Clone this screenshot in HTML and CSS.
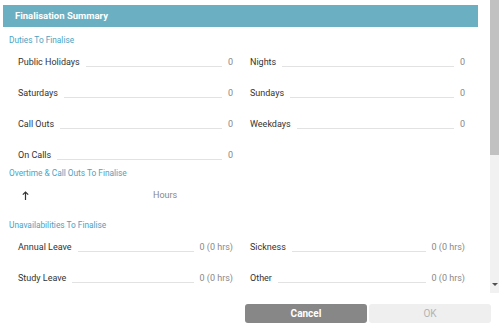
FILE: index.html
```
<!doctype html>
<html lang="en">
<head>
    <meta charset="utf-8">
    <title>Finalisation Summary</title>
    <link rel="stylesheet" href="styles.css">
</head>
<body>
<div class="dialog">
    <div class="main">
        <div class="content">
            <div class="header">Finalisation Summary</div>

            <div class="section-title first">Duties To Finalise</div>
            <div class="grid">
                <div class="row"><span class="label">Public Holidays</span><span class="line"></span><span class="value">0</span></div>
                <div class="row"><span class="label">Nights</span><span class="line"></span><span class="value">0</span></div>
                <div class="row"><span class="label">Saturdays</span><span class="line"></span><span class="value">0</span></div>
                <div class="row"><span class="label">Sundays</span><span class="line"></span><span class="value">0</span></div>
                <div class="row"><span class="label">Call Outs</span><span class="line"></span><span class="value">0</span></div>
                <div class="row"><span class="label">Weekdays</span><span class="line"></span><span class="value">0</span></div>
                <div class="row"><span class="label">On Calls</span><span class="line"></span><span class="value">0</span></div>
            </div>

            <div class="section-title">Overtime &amp; Call Outs To Finalise</div>
            <div class="table-head">
                <span class="sort">
                    <svg width="7" height="9" viewBox="0 0 7 9">
                        <path d="M3.5 1 V9 M0.8 3.7 L3.5 1 L6.2 3.7" fill="none" stroke="#333" stroke-width="1.2"/>
                    </svg>
                </span>
                <span class="col-hours">Hours</span>
            </div>

            <div class="section-title after-table">Unavailabilities To Finalise</div>
            <div class="grid">
                <div class="row"><span class="label">Annual Leave</span><span class="line"></span><span class="value">0 (0 hrs)</span></div>
                <div class="row"><span class="label">Sickness</span><span class="line"></span><span class="value">0 (0 hrs)</span></div>
                <div class="row"><span class="label">Study Leave</span><span class="line"></span><span class="value">0 (0 hrs)</span></div>
                <div class="row"><span class="label">Other</span><span class="line"></span><span class="value">0 (0 hrs)</span></div>
            </div>
        </div>
        <div class="scrollbar">
            <div class="thumb"></div>
            <div class="track"></div>
            <div class="arrow-down"></div>
        </div>
    </div>
    <div class="footer">
        <button type="button" class="btn btn-cancel">Cancel</button>
        <button type="button" class="btn btn-ok" disabled>OK</button>
    </div>
</div>
</body>
</html>
```
FILE: styles.css
```
body {
    margin: 0;
    font-family: Roboto, "Liberation Sans", sans-serif;
    background-color: white;
    color: #333;
}
.dialog {
    width: 501px;
    height: 333px;
    display: flex;
    flex-direction: column;
}
.main {
    display: flex;
    height: 293px;
}
.content {
    width: 490px;
    overflow: hidden;
}
.header {
    margin: 5px 12px 0 3px;
    height: 22px;
    line-height: 22px;
    padding-left: 12px;
    background-color: #6aafc2;
    color: white;
    font-weight: bold;
    font-size: 9.5px;
}
.section-title {
    margin-top: 6px;
    padding-left: 9px;
    font-size: 8.3px;
    color: #4ba3c3;
    height: 12px;
    line-height: 12px;
}
.section-title.first {
    margin-top: 7px;
}
.section-title.after-table {
    margin-top: 8px;
}
.grid {
    display: grid;
    grid-template-columns: 215px 215px;
    column-gap: 17px;
    padding-left: 18px;
    margin-bottom: -9px;
}
.row {
    display: flex;
    align-items: center;
    height: 31px;
    font-size: 9px;
}
.label {
    color: #333;
}
.line {
    flex: 1;
    height: 1px;
    margin: 10px 6px 0 6px;
    background-color: #e2e2e2;
}
.value {
    color: #888;
}
.table-head {
    display: flex;
    align-items: center;
    height: 32px;
    font-size: 9px;
}
.sort {
    display: flex;
    margin-left: 22px;
    width: 131px;
}
.col-hours {
    color: #888;
}
.scrollbar {
    width: 9px;
    display: flex;
    flex-direction: column;
    background-color: #f1f1f1;
}
.thumb {
    height: 155px;
    background-color: #c1c1c1;
}
.track {
    flex: 1;
}
.arrow-down {
    align-self: center;
    margin-bottom: 7px;
    width: 0;
    height: 0;
    border-left: 3px solid transparent;
    border-right: 3px solid transparent;
    border-top: 3px solid #505050;
}
.footer {
    display: flex;
    gap: 2px;
    padding: 11px 0 0 245px;
}
.btn {
    width: 122px;
    height: 19px;
    border: none;
    border-radius: 3px;
    font-family: Roboto, "Liberation Sans", sans-serif;
    font-size: 10px;
    padding: 0;
}
.btn-cancel {
    background-color: #878787;
    color: white;
    font-weight: bold;
}
.btn-ok {
    background-color: #efefef;
    color: #b4b4b4;
}
```
